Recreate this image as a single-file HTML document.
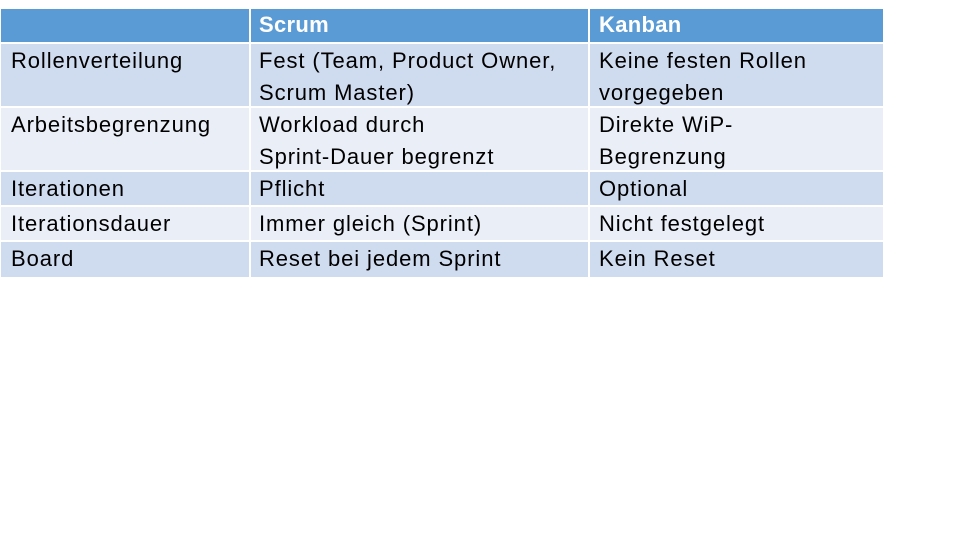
<!DOCTYPE html>
<html><head><style>
body{margin:0;width:960px;height:540px;background:#fff;overflow:hidden;font-family:"Liberation Sans",Calibri,sans-serif;}
.c{position:absolute;box-sizing:border-box;font-size:22px;letter-spacing:0.9px;line-height:32px;color:#000;padding-left:10px;padding-top:1px;}
.h{background:#5b9bd5;color:#fff;font-weight:bold;letter-spacing:0.3px;}
.a{background:#cfdbee;}
.b{background:#e9eef7;}
</style></head><body>
<div class="c h" style="left:1px;top:9px;width:248px;height:33px"></div>
<div class="c h" style="left:251px;top:9px;width:337px;height:33px;padding-left:8px;line-height:30px">Scrum</div>
<div class="c h" style="left:590px;top:9px;width:293px;height:33px;padding-left:9px;line-height:30px">Kanban</div>

<div class="c a" style="left:1px;top:44px;width:248px;height:62px">Rollenverteilung</div>
<div class="c a" style="left:251px;top:44px;width:337px;height:62px;padding-left:8px">Fest (Team, Product Owner,<br>Scrum Master)</div>
<div class="c a" style="left:590px;top:44px;width:293px;height:62px;padding-left:9px">Keine festen Rollen<br>vorgegeben</div>

<div class="c b" style="left:1px;top:108px;width:248px;height:62px">Arbeitsbegrenzung</div>
<div class="c b" style="left:251px;top:108px;width:337px;height:62px;padding-left:8px">Workload durch<br>Sprint-Dauer begrenzt</div>
<div class="c b" style="left:590px;top:108px;width:293px;height:62px;padding-left:9px">Direkte WiP-<br>Begrenzung</div>

<div class="c a" style="left:1px;top:172px;width:248px;height:33px">Iterationen</div>
<div class="c a" style="left:251px;top:172px;width:337px;height:33px;padding-left:8px">Pflicht</div>
<div class="c a" style="left:590px;top:172px;width:293px;height:33px;padding-left:9px">Optional</div>

<div class="c b" style="left:1px;top:207px;width:248px;height:33px">Iterationsdauer</div>
<div class="c b" style="left:251px;top:207px;width:337px;height:33px;padding-left:8px">Immer gleich (Sprint)</div>
<div class="c b" style="left:590px;top:207px;width:293px;height:33px;padding-left:9px">Nicht festgelegt</div>

<div class="c a" style="left:1px;top:242px;width:248px;height:35px">Board</div>
<div class="c a" style="left:251px;top:242px;width:337px;height:35px;padding-left:8px">Reset bei jedem Sprint</div>
<div class="c a" style="left:590px;top:242px;width:293px;height:35px;padding-left:9px">Kein Reset</div>
</body></html>
